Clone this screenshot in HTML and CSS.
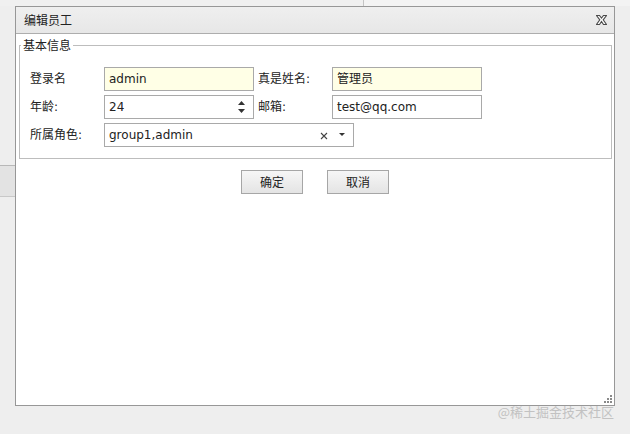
FILE: index.html
```html
<!DOCTYPE html>
<html lang="zh-CN">
<head>
<meta charset="utf-8">
<title>编辑员工</title>
<link rel="stylesheet" href="styles.css">
</head>
<body>
<div class="desk">
  <div class="desk-top"><div class="desk-top-split"></div></div>
  <div class="desk-band"></div>
</div>

<div class="dialog">
  <div class="dialog-header">
    <span class="dialog-title">编辑员工</span>
    <svg class="dialog-close" width="11" height="10" viewBox="0 0 11 10">
      <polygon points="0.5,0.5 3.5,0.5 5.5,3.2 7.5,0.5 10.5,0.5 7.2,4.8 10.5,9.5 7.5,9.5 5.5,6.5 3.5,9.5 0.5,9.5 3.8,4.8" fill="#fff" stroke="#4a4a4a" stroke-width="1.1" stroke-linejoin="miter"/>
    </svg>
  </div>
  <div class="dialog-body">
    <fieldset class="group">
      <legend class="group-legend">基本信息</legend>
      <div class="form-row">
        <span class="field-label">登录名</span>
        <div class="field field-required"><span class="field-value">admin</span></div>
        <span class="field-label field-label-second">真是姓名:</span>
        <div class="field field-required"><span class="field-value">管理员</span></div>
      </div>
      <div class="form-row">
        <span class="field-label">年龄:</span>
        <div class="field">
          <span class="field-value">24</span>
          <span class="spinner">
            <svg width="7" height="4" viewBox="0 0 7 4"><polygon points="0,4 7,4 3.5,0" fill="#333"/></svg>
            <svg width="7" height="4" viewBox="0 0 7 4"><polygon points="0,0 7,0 3.5,4" fill="#333"/></svg>
          </span>
        </div>
        <span class="field-label field-label-second">邮箱:</span>
        <div class="field"><span class="field-value">test@qq.com</span></div>
      </div>
      <div class="form-row">
        <span class="field-label">所属角色:</span>
        <div class="field field-wide">
          <span class="field-value">group1,admin</span>
          <svg class="combo-clear" width="8" height="8" viewBox="0 0 8 8"><path d="M1 1 L7 7 M7 1 L1 7" stroke="#444" stroke-width="1.1" fill="none"/></svg>
          <svg class="combo-arrow" width="6" height="3" viewBox="0 0 6 3"><polygon points="0,0 6,0 3,3" fill="#333"/></svg>
        </div>
      </div>
    </fieldset>
    <div class="actions">
      <button class="btn" type="button">确定</button>
      <button class="btn" type="button">取消</button>
    </div>
    <svg class="resize-grip" width="8" height="8" viewBox="0 0 8 8">
      <rect x="6" y="0" width="2" height="2" fill="#8a8a8a"/>
      <rect x="3" y="3" width="2" height="2" fill="#8a8a8a"/>
      <rect x="6" y="3" width="2" height="2" fill="#8a8a8a"/>
      <rect x="0" y="6" width="2" height="2" fill="#8a8a8a"/>
      <rect x="3" y="6" width="2" height="2" fill="#8a8a8a"/>
      <rect x="6" y="6" width="2" height="2" fill="#8a8a8a"/>
    </svg>
  </div>
</div>

<div class="watermark">@稀土掘金技术社区</div>
</body>
</html>
```

FILE: styles.css
```css
html, body {
  margin: 0;
  padding: 0;
}

body {
  width: 630px;
  height: 434px;
  background: #eeeeee;
  position: relative;
  overflow: hidden;
  font-family: "DejaVu Sans", "Noto Sans CJK SC", sans-serif;
  font-size: 12px;
  color: #222;
}

.desk {
  height: 100%;
}

.desk-top {
  height: 6px;
  background: #f0f0f0;
}

.desk-top-split {
  margin-left: 363px;
  height: 6px;
  border-left: 1px solid #c4c4c4;
  background: #f3f3f3;
}

.desk-band {
  margin-top: 159px;
  width: 15px;
  height: 30px;
  background: #e3e3e3;
  border-top: 1px solid #b8b8b8;
  border-bottom: 1px solid #c8c8c8;
}

.dialog {
  position: absolute;
  left: 15px;
  top: 6px;
  width: 600px;
  height: 400px;
  box-sizing: border-box;
  border: 1px solid #979797;
  background: #fff;
  display: flex;
  flex-direction: column;
}

.dialog-header {
  height: 26px;
  flex: none;
  border-bottom: 1px solid #adadad;
  background: linear-gradient(#efefef, #e7e7e7);
  display: flex;
  align-items: center;
  justify-content: space-between;
  padding: 0 7px 0 8px;
}

.dialog-title {
  font-family: "Noto Sans CJK SC", sans-serif;
  font-size: 12px;
  line-height: 16px;
  color: #222;
}

.dialog-close {
  display: block;
}

.dialog-body {
  flex: 1;
  display: flex;
  flex-direction: column;
}

.group {
  margin: 3px 2px 0 3px;
  padding: 14px 10px 11px 10px;
  border: 1px solid #bdbdbd;
  display: flex;
  flex-direction: column;
  gap: 4px;
  min-width: 0;
}

.group-legend {
  margin-left: -9px;
  padding: 0 2px 0 2px;
  font-family: "Noto Sans CJK SC", sans-serif;
  font-size: 12px;
  line-height: 16px;
  color: #222;
}

.form-row {
  display: flex;
  align-items: center;
  height: 24px;
}

.field-label {
  width: 74px;
  flex: none;
  font-size: 12px;
  line-height: 16px;
  color: #222;
}

.field-label-second {
  width: 74px;
  padding-left: 4px;
}

.field {
  width: 150px;
  height: 24px;
  flex: none;
  box-sizing: border-box;
  border: 1px solid #a9a9a9;
  background: #fff;
  display: flex;
  align-items: center;
  padding: 0 9px 0 4px;
}

.field-required {
  background: #ffffe6;
}

.field-wide {
  width: 250px;
}

.field-value {
  flex: 1;
  font-size: 12px;
  line-height: 16px;
  color: #222;
  white-space: nowrap;
}

.spinner {
  display: flex;
  flex-direction: column;
  gap: 4px;
  margin-right: -1px;
}

.spinner svg {
  display: block;
}

.combo-clear {
  display: block;
  margin-right: 11px;
  margin-top: 1px;
}

.combo-arrow {
  display: block;
  margin-top: -1px;
  margin-right: -1px;
}

.actions {
  margin-top: 11px;
  display: flex;
  justify-content: center;
  gap: 24px;
}

.btn {
  width: 62px;
  height: 24px;
  box-sizing: border-box;
  border: 1px solid #a6a6a6;
  border-radius: 0;
  background: linear-gradient(#f6f6f6, #e4e4e4);
  font-family: "Noto Sans CJK SC", sans-serif;
  font-size: 12px;
  line-height: 16px;
  color: #222;
  padding: 0;
  margin: 0;
}

.resize-grip {
  display: block;
  margin-top: auto;
  align-self: flex-end;
  margin-right: 2px;
  margin-bottom: 2px;
}

.watermark {
  position: absolute;
  right: 16px;
  top: 403px;
  font-family: "Noto Sans CJK SC", sans-serif;
  font-size: 13px;
  line-height: 18px;
  color: #c2c2c2;
}
```
